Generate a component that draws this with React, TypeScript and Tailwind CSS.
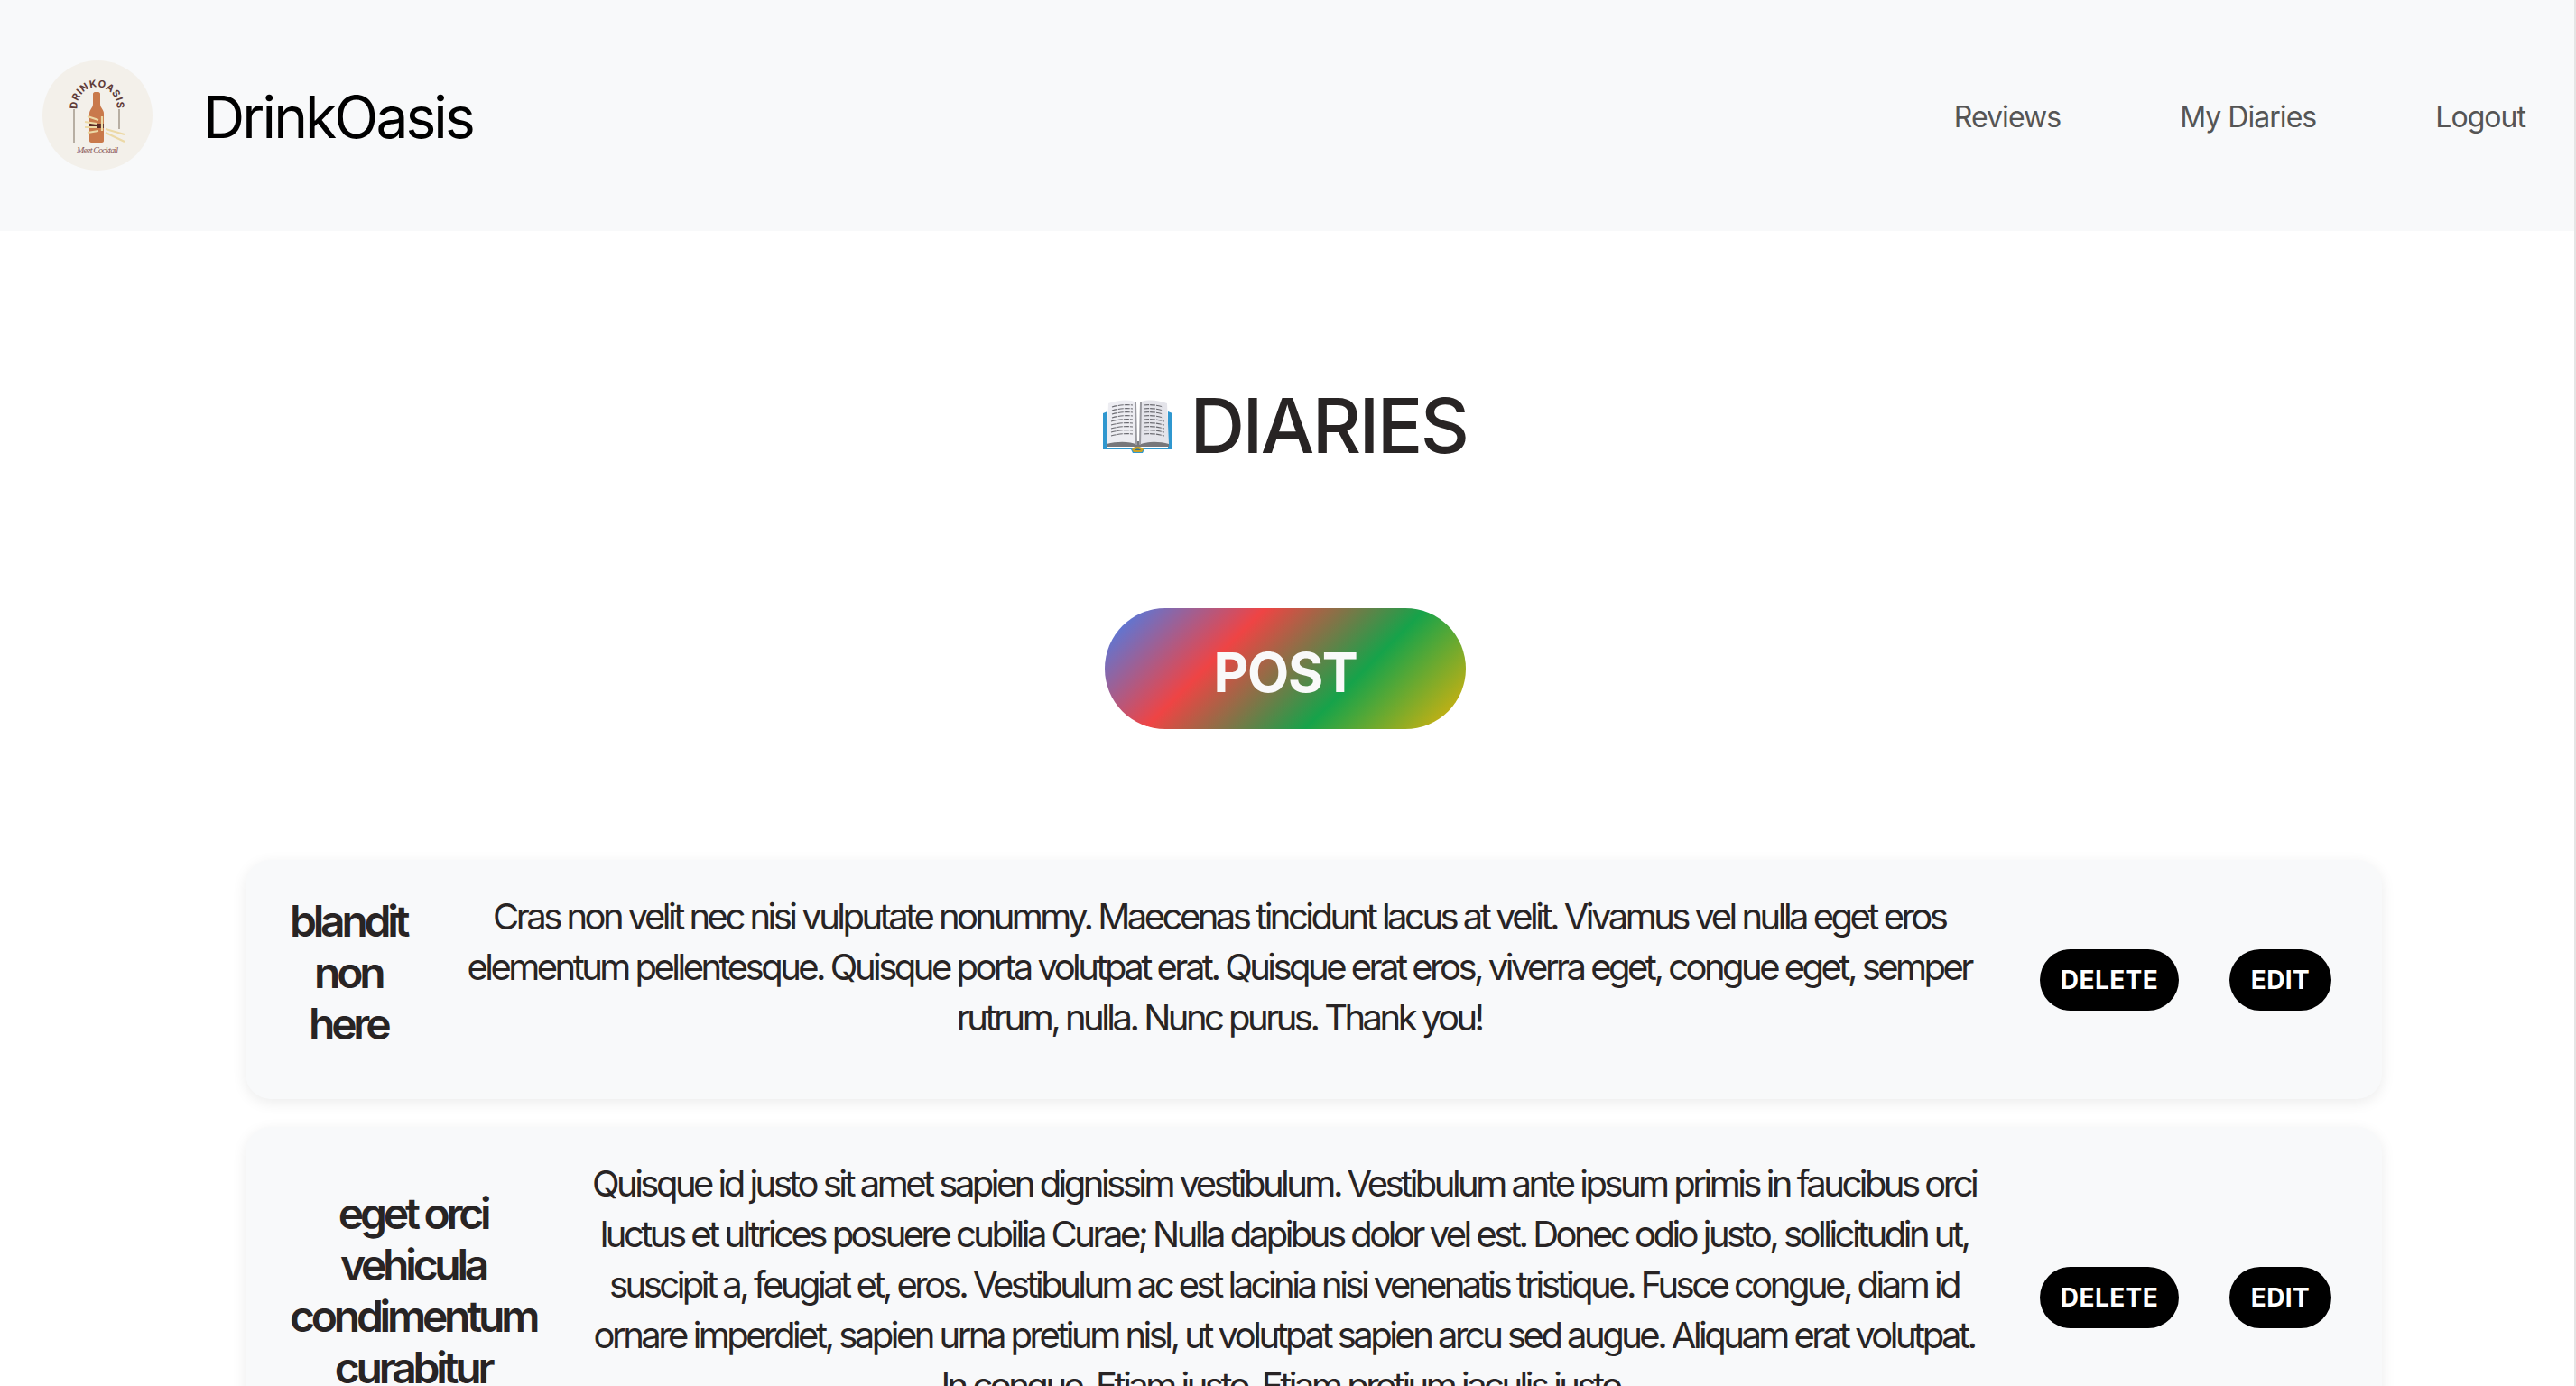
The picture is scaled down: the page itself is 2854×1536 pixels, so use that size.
const font = "font-['Inter',sans-serif]";

function Logo() {
  return (
    <div className="h-[122px] w-[122px] shrink-0 rounded-full bg-[#f3f0ea]">
      <svg viewBox="0 0 122 122" className="h-full w-full">
        <defs>
          <path id="logo-arc" d="M 45 67 A 22 22 0 1 1 76 67" />
        </defs>
        <text fill="#5e3a36" fontSize="11" fontWeight="700" letterSpacing="0.6" fontFamily="Inter, sans-serif">
          <textPath href="#logo-arc" startOffset="50%" textAnchor="middle">DRINKOASIS</textPath>
        </text>
        <path d="M35 54v37M85 54v22" stroke="#a89f92" strokeWidth="1.6" />
        <path d="M56 37c0-1 1-2 2-2h4c1 0 2 1 2 2v11c0 5 4 6 4 11v30c0 1-1 2-2 2H54c-1 0-2-1-2-2V59c0-5 4-6 4-11z" fill="#c9794b" />
        <path d="M52 70h16v5H52z" fill="#5b2a26" />
        <path
          d="M50 62l12 4M47 68l13 2M47 74l13 0M50 80l12-2M66 62v16M70 76l21 6M70 80l21 10"
          stroke="#ecd9a6"
          strokeWidth="2.2"
          fill="none"
        />
        <text x="38" y="103" fill="#8a5a5c" fontSize="10" textLength="46" fontStyle="italic" fontFamily="Liberation Serif, serif">
          Meet Cocktail
        </text>
      </svg>
    </div>
  );
}

function BookEmoji() {
  return (
    <svg viewBox="0 0 77 62" className="h-[62px] w-[77px] shrink-0">
      <path d="M0 17l5-2v40h67V15l5 2v40H46l-2 4H33l-2-4H0z" fill="#2f97cf" />
      <path d="M4 48h69v6H42l-4 2-4-2H4z" fill="#77777b" />
      <path d="M6 6c11-4 24-5 31-1l1 47c-8-4-22-4-34-1z" fill="#ededf2" />
      <path d="M71 6c-11-4-23-5-30-1l-1 47c8-4 22-4 33-1z" fill="#e4e4ea" />
      <path d="M35 5h2l1 47h-2zM41 5h2l-1 47h-2z" fill="#9a9aa0" />
      <path
        d="M10 10c7-2 15-3 23-2M10 14c7-2 15-3 23-2M10 18c7-2 15-3 23-2M10 22c7-2 15-3 23-2M9 26c7-2 16-3 24-2M9 30c7-2 16-3 24-2M9 34c7-2 16-3 24-2M9 38c7-2 16-3 24-2M9 42c7-2 16-3 24-2M45 8c8-1 15 0 22 2M45 12c8-1 15 0 22 2M45 16c8-1 15 0 22 2M45 20c8-1 15 0 22 2M45 24c8-1 15 0 23 2M45 28c8-1 15 0 23 2M45 32c8-1 15 0 23 2M45 36c8-1 15 0 23 2M45 40c8-1 15 0 23 2"
        stroke="#6a6a70"
        strokeWidth="1.1"
        strokeDasharray="6 1"
        fill="none"
      />
      <path d="M32 57c2-4 11-4 13 0l-2 3H34z" fill="#c9a227" />
      <path d="M35 58c1-2 6-2 7 0z" fill="#2a6f93" />
    </svg>
  );
}

function DiaryCard({ title, body }: { title: string; body: string }) {
  return (
    <div className="flex items-center rounded-[28px] bg-[#f8f9fa] py-8 pl-[49px] pr-14 shadow-[0_4px_16px_rgba(0,0,0,0.08)]">
      <h3 className="mb-4 w-min shrink-0 text-center text-[48px]/[57px] font-semibold tracking-[-0.088em] text-[#282424]">
        {title}
      </h3>
      <p className="mb-[30px] ml-[51px] mr-[60px] mt-[3px] flex-1 text-center text-[40px]/[56px] tracking-[-0.088em] text-[#282424]">
        {body}
      </p>
      <div className="flex shrink-0 gap-14">
        <button className="h-[68px] w-[154px] rounded-full bg-black text-[28px] font-bold tracking-[0.015em] text-white">
          DELETE
        </button>
        <button className="h-[68px] w-[113px] rounded-full bg-black text-[28px] font-bold tracking-[0.015em] text-white">
          EDIT
        </button>
      </div>
    </div>
  );
}

export default function App() {
  return (
    <div className={`${font} flex h-screen w-full overflow-hidden bg-white`}>
      <div className="min-w-0 flex-1">
        <nav className="flex h-64 items-center bg-[#f8f9fa] pl-[47px] pr-[54px]">
          <Logo />
          <span className="ml-14 mt-1 text-[64px] tracking-[-0.045em] text-black">DrinkOasis</span>
          <div className="ml-auto mt-1 flex items-center gap-[132px] text-[32px] tracking-[-0.03em] text-[#555555]">
            <a>Reviews</a>
            <a>My Diaries</a>
            <a>Logout</a>
          </div>
        </nav>
        <div className="pr-1">
          <div className="flex flex-col items-center pt-[156px]">
            <h1 className="flex items-center gap-[19px] text-[84px]/[120px] font-medium tracking-[-0.031em] text-[#282424]">
              <BookEmoji />
              DIARIES
            </h1>
            <button className="mt-[142px] h-[134px] w-[400px] rounded-full bg-[linear-gradient(135deg,#3b82f6,#ef4444,#16a34a,#eab308)] pt-2 text-[60px] font-bold tracking-[-0.023em] text-[#f9f9f9]">
              POST
            </button>
          </div>
          <div className="ml-[272px] mr-[209px] mt-[145px] flex flex-col gap-[31px]">
            <DiaryCard
              title="blandit non here"
              body="Cras non velit nec nisi vulputate nonummy. Maecenas tincidunt lacus at velit. Vivamus vel nulla eget eros elementum pellentesque. Quisque porta volutpat erat. Quisque erat eros, viverra eget, congue eget, semper rutrum, nulla. Nunc purus. Thank you!"
            />
            <DiaryCard
              title="eget orci vehicula condimentum curabitur"
              body="Quisque id justo sit amet sapien dignissim vestibulum. Vestibulum ante ipsum primis in faucibus orci luctus et ultrices posuere cubilia Curae; Nulla dapibus dolor vel est. Donec odio justo, sollicitudin ut, suscipit a, feugiat et, eros. Vestibulum ac est lacinia nisi venenatis tristique. Fusce congue, diam id ornare imperdiet, sapien urna pretium nisl, ut volutpat sapien arcu sed augue. Aliquam erat volutpat. In congue. Etiam justo. Etiam pretium iaculis justo."
            />
          </div>
        </div>
      </div>
      <div className="w-[2px] shrink-0 bg-[#e5e5e5]" />
    </div>
  );
}
